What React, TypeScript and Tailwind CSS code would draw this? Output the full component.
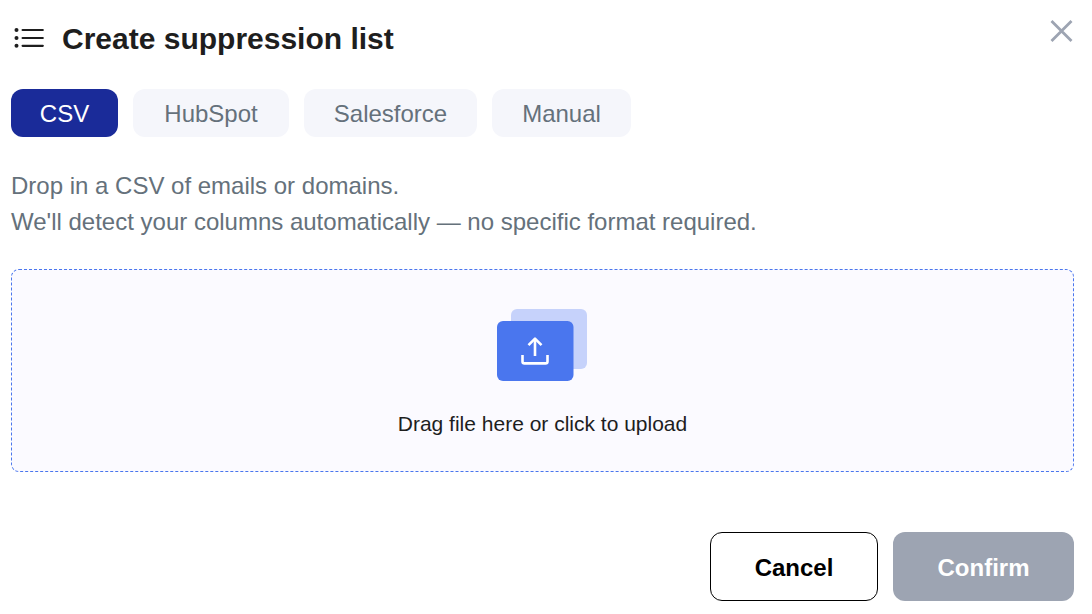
import { useState } from "react";
import clsx from "clsx";

const SOURCES = [
  { id: "csv", label: "CSV", width: "min-w-[107px]" },
  { id: "hubspot", label: "HubSpot", width: "min-w-[156px]" },
  { id: "salesforce", label: "Salesforce", width: "min-w-[173px]" },
  { id: "manual", label: "Manual", width: "min-w-[139px]" },
];

function ListIcon() {
  return (
    <svg
      width="32"
      height="22"
      viewBox="0 0 32 22"
      fill="none"
      stroke="#1e1e1e"
      strokeWidth="2.2"
      strokeLinecap="round"
      aria-hidden="true"
    >
      <path d="M8.6 2h20.2M8.6 10h20.2M8.6 17.8h20.2" />
      <g fill="#1e1e1e" stroke="none">
        <circle cx="2.5" cy="2" r="2" />
        <circle cx="2.5" cy="10" r="2" />
        <circle cx="2.5" cy="17.8" r="2" />
      </g>
    </svg>
  );
}

function CloseIcon() {
  return (
    <svg
      width="24"
      height="24"
      viewBox="0 0 24 24"
      fill="none"
      stroke="#9da4b2"
      strokeWidth="2.8"
      aria-hidden="true"
    >
      <path d="M1.5 2l20 20M21.5 2l-20 20" />
    </svg>
  );
}

function UploadArtwork() {
  return (
    <svg width="92" height="72" viewBox="0 0 92 72" fill="none" aria-hidden="true">
      <rect x="14" y="0" width="76" height="60" rx="6" fill="#c6d2fb" />
      <rect x="0" y="12" width="76.5" height="60" rx="6" fill="#4a76ee" />
      <g stroke="#fff" strokeWidth="2.6" strokeLinejoin="round">
        <path d="M38 47V30.5" />
        <path d="M31.5 36.2l6.5-6.5 6.5 6.5" />
        <path d="M25.5 46v6.4a2 2 0 0 0 2 2h21a2 2 0 0 0 2-2V46" />
      </g>
    </svg>
  );
}

function App() {
  const [source, setSource] = useState("csv");

  return (
    <main
      role="dialog"
      aria-labelledby="dialog-title"
      className="bg-white pt-4 pr-[18px] pb-3 pl-[11px] font-['Liberation_Sans',Arial,sans-serif] text-[#1e1e1e]"
    >
      <header className="flex items-start justify-between">
        <div className="flex h-[46px] items-center gap-4 pl-[3px]">
          <ListIcon />
          <h1 id="dialog-title" className="text-3xl font-bold">
            Create suppression list
          </h1>
        </div>
        <button type="button" aria-label="Close" className="pt-[3px]">
          <CloseIcon />
        </button>
      </header>

      <div className="mt-[27px] flex flex-wrap gap-[15px]">
        {SOURCES.map(({ id, label, width }) => (
          <button
            key={id}
            type="button"
            aria-pressed={source === id}
            onClick={() => setSource(id)}
            className={clsx(
              "h-12 rounded-xl px-6 pt-0.5 text-2xl",
              width,
              source === id
                ? "bg-[#1a2b99] text-white"
                : "bg-[#f5f6fb] text-[#65717b]"
            )}
          >
            {label}
          </button>
        ))}
      </div>

      <p className="mt-[31px] text-2xl leading-9 text-[#65717b]">
        Drop in a CSV of emails or domains.
        <br />
        We'll detect your columns automatically — no specific format required.
      </p>

      <label
        htmlFor="csv-file"
        className="mt-[29px] flex cursor-pointer flex-col items-center gap-7 rounded-lg border border-dashed border-[#4a76ee] bg-[#fbfaff] pt-[39px] pb-8"
      >
        <UploadArtwork />
        <span className="text-[21px] leading-[30px]">
          Drag file here or click to upload
        </span>
        <input id="csv-file" type="file" accept=".csv" className="sr-only" />
      </label>

      <footer className="mt-[60px] flex justify-end gap-[15px]">
        <button
          type="button"
          className="h-[69px] min-w-[168px] rounded-xl border border-black px-10 pt-0.5 text-2xl font-bold text-black"
        >
          Cancel
        </button>
        <button
          type="button"
          disabled
          className="h-[69px] min-w-[181px] rounded-xl bg-[#9da4b2] px-10 pt-0.5 text-2xl font-bold text-white"
        >
          Confirm
        </button>
      </footer>
    </main>
  );
}

export default App;
